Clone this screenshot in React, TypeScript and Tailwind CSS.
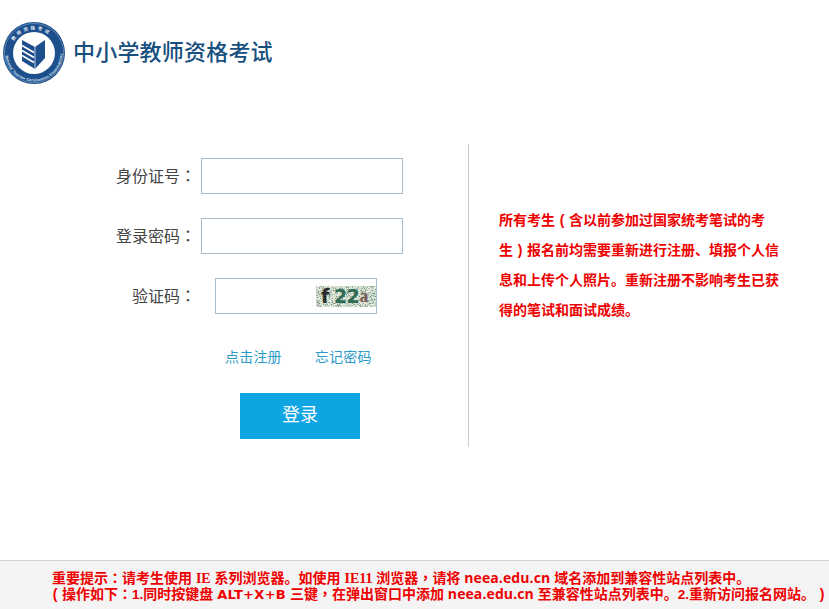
import React from 'react';

const cjk = "font-['Liberation_Sans','Noto_Sans_CJK_SC',sans-serif]";

// 全角标点在参考图里是居中的，繁体字形才是这样
const P: React.FC<{ children: React.ReactNode }> = ({ children }) => (
  <span className="font-['Noto_Sans_CJK_TC',sans-serif] leading-none">{children}</span>
);

// 括号也占一个字宽并居中
const Paren: React.FC<{ children: React.ReactNode }> = ({ children }) => (
  <span className="inline-block w-[14px] text-center leading-none">{children}</span>
);

const Domain: React.FC = () => (
  <span className="font-['Open_Sans',sans-serif] tracking-[0.1px] leading-none">neea.edu.cn</span>
);

const Serif: React.FC<{ children: React.ReactNode }> = ({ children }) => (
  <span className="font-['Liberation_Serif',serif] leading-none">{children}</span>
);

const Logo: React.FC = () => (
  <svg width="64" height="64" viewBox="0 0 64 64" className="shrink-0">
    <defs>
      <path id="ringTop" d="M 8.5 32 A 23.5 23.5 0 0 1 55.5 32" />
      <path id="ringBottom" d="M 3.5 32 A 28.5 28.5 0 0 0 60.5 32" />
    </defs>
    <circle cx="32" cy="32" r="31" fill="#1d4f8c" />
    <circle cx="32" cy="32" r="29.6" fill="none" stroke="#6f93bd" strokeWidth="0.8" />
    <circle cx="32" cy="32" r="21" fill="#ffffff" />
    <text fontSize="4.5" fill="#e3ebf4" fontWeight="700" letterSpacing="2.4" className="font-['Noto_Sans_CJK_SC']">
      <textPath href="#ringTop" startOffset="17%">教师资格考试</textPath>
    </text>
    <text fontSize="3.8" fill="#dbe6f2" fontWeight="700" letterSpacing="0.15" className="font-['Liberation_Sans']">
      <textPath href="#ringBottom" startOffset="3%">National Teacher Certification Examinations</textPath>
    </text>
    <path d="M20 19 L33 26 L43 19 L43 37 L33 48 L20 40 Z" fill="#1d4f8c" />
    <path d="M20 24.5 L32 31.5 M20 29.5 L32 36.5 M20 34.5 L32 41.5" stroke="#ffffff" strokeWidth="1.6" fill="none" />
    <path d="M33 26 L33 48" stroke="#ffffff" strokeWidth="0.7" />
  </svg>
);

const Captcha: React.FC = () => {
  const dots: { x: number; y: number; c: string }[] = [];
  const colors = ['#8fb59a', '#c9d6c6', '#6f9b86', '#eef1ea', '#a7a7a0', '#b7cdb9', '#f4f6f0'];
  for (let i = 0; i < 900; i++) {
    const r = Math.abs(Math.sin(i * 12.9898) * 43758.5453);
    const s = Math.abs(Math.sin(i * 78.233) * 12543.123);
    dots.push({ x: Math.floor(r) % 60, y: Math.floor(s) % 21, c: colors[Math.floor(r * 10) % colors.length] });
  }
  return (
    <div className="relative w-[60px] h-[21px] overflow-hidden bg-[#d5e0d2]">
      <svg width="60" height="21" className="absolute inset-0">
        {dots.map((d, i) => (
          <rect key={i} x={d.x} y={d.y} width="1" height="1" fill={d.c} />
        ))}
      </svg>
      <div className="relative flex items-center h-[21px] pl-[5px] font-bold leading-none">
        <span className="font-['DejaVu_Sans',sans-serif] text-[19px] text-[#2b2b2b] w-[13px]">f</span>
        <span className="font-['DejaVu_Sans',sans-serif] text-[19px] text-[#2f6a52] w-[12.5px]">2</span>
        <span className="font-['DejaVu_Sans',sans-serif] text-[19px] text-[#2f6a52] w-[13px]">2</span>
        <span className="font-['Liberation_Serif',serif] text-[18px] text-[#7d5a50]">a</span>
      </div>
    </div>
  );
};

const Row: React.FC<{ label: string; className?: string; children: React.ReactNode }> = ({ label, className, children }) => (
  <div className={'flex items-center ' + (className || '')}>
    <label className="w-[196px] pt-[2px] text-right text-[16px] leading-[24px] text-[#444444]">
      {label}
      <P>：</P>
    </label>
    {children}
  </div>
);

export default function App() {
  return (
    <div className={"relative w-[829px] h-[609px] overflow-hidden bg-white flex flex-col " + cjk}>
      <header className="flex items-center h-[144px] pl-[2px] pb-[40px] pt-[1px]">
        <Logo />
        <h1 className="ml-[7px] text-[22px] tracking-[0.2px] font-medium text-[#17507f] leading-none">中小学教师资格考试</h1>
      </header>

      <main className="flex h-[303px]">
        <div className="w-[469px] border-r border-[#cccccc] pt-[14px]">
          <Row label="身份证号">
            <input className="ml-[5px] w-[202px] h-[36px] border border-[#a9bcc9] bg-white outline-none" />
          </Row>
          <Row label="登录密码" className="mt-[24px]">
            <input className="ml-[5px] w-[202px] h-[36px] border border-[#a9bcc9] bg-white outline-none" />
          </Row>
          <Row label="验证码" className="mt-[24px]">
            <div className="ml-[19px] w-[162px] h-[36px] border border-[#a9bcc9] bg-white flex items-center justify-end">
              <Captcha />
            </div>
          </Row>
          <div className="flex mt-[33px] pl-[225px] gap-[33px] text-[14px] tracking-[0.2px] leading-[20px] text-[#2b9ac9]">
            <a>点击注册</a>
            <a>忘记密码</a>
          </div>
          <button className="block ml-[240px] mt-[26px] w-[120px] h-[46px] pb-[2px] bg-[#0ea5e2] text-white text-[18px]">登录</button>
        </div>
        <div className="pl-[30px] pt-[61px] w-[310px] text-[14px] font-bold leading-[30px] text-[#ee0000]">
          <p>所有考生<Paren>(</Paren>含以前参加过国家统考笔试的考</p>
          <p>生<Paren>)</Paren>报名前均需要重新进行注册、填报个人信</p>
          <p>息和上传个人照片。重新注册不影响考生已获</p>
          <p>得的笔试和面试成绩。</p>
        </div>
      </main>

      <footer className="mt-auto h-[49px] border-t border-[#d4d4d4] bg-[#f4f4f4] pl-[52px] pt-[9px] text-[14px] font-bold leading-[15px] text-[#ee0000] whitespace-nowrap">
        <p>
          重要提示<P>：</P>请考生使用 <Serif>IE</Serif> 系列浏览器。如使用 <Serif>IE11</Serif> 浏览器<P>，</P>请将 <Domain /> 域名添加到兼容性站点列表中。
        </p>
        <p className="ml-[-4px]">
          <Paren>(</Paren>操作如下<P>：</P><span className="text-[13.5px] leading-none">1.</span>同时按键盘 <span className="font-['DejaVu_Sans',sans-serif] text-[13px] tracking-[0.3px] leading-none">ALT+X+B</span> 三键<P>，</P>在弹出窗口中添加 <Domain /> 至兼容性站点列表中。<span className="text-[13.5px] leading-none">2.</span>重新访问报名网站。<Paren>)</Paren>
        </p>
      </footer>
    </div>
  );
}
